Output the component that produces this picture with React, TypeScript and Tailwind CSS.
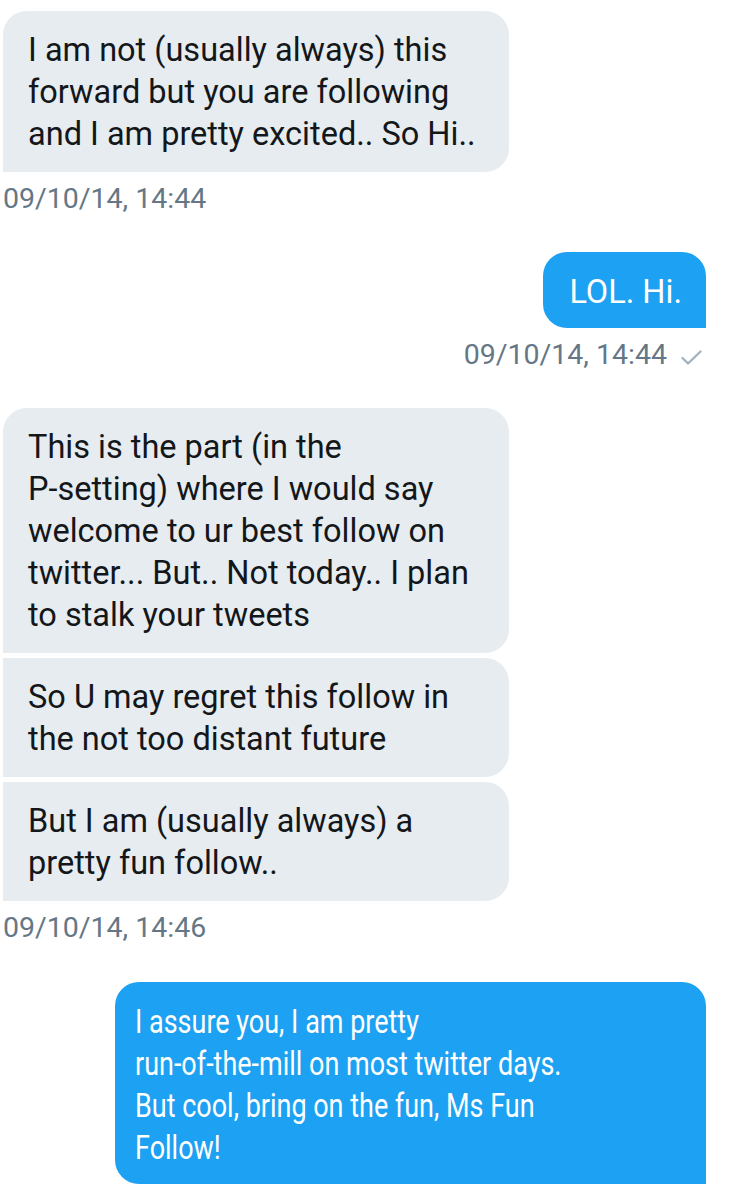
type Msg = { lines: string[] };

const Received = ({ lines, shape }: { lines: string[]; shape: string }) => (
  <div className={`w-[506px] bg-[#e6ecf0] text-[#14171a] px-[25px] pt-[18px] pb-[17px] whitespace-nowrap ${shape}`}>
    {lines.map((l, i) => (
      <div key={i}>{l}</div>
    ))}
  </div>
);

const Sent = ({ lines, width, squeeze }: { lines: string[]; width: string; squeeze?: boolean }) => (
  <div
    className={`bg-[#1da1f2] text-white pt-[19px] pb-[15px] rounded-[24px] rounded-br-none whitespace-nowrap ${
      squeeze ? "pl-[20px]" : "pl-[26px] pr-[24px]"
    } ${width}`}
  >
    {lines.map((l, i) => (
      <div key={i} className={squeeze ? "origin-left scale-x-[0.83]" : ""}>
        {l}
      </div>
    ))}
  </div>
);

const Stamp = ({ text, right, check }: { text: string; right?: boolean; check?: boolean }) => (
  <div
    className={`mt-[9px] h-[36px] leading-[36px] text-[28.5px] text-[#657786] flex items-center gap-[14px] ${
      right ? "justify-end pr-[4px]" : ""
    }`}
  >
    <span>{text}</span>
    {check && (
      <svg width="21" height="15" viewBox="0 0 21 15" fill="none" className="mt-[4px]">
        <path d="M1.5 8 L7 13.5 L19.5 1.5" stroke="#a4b3be" strokeWidth="2.4" strokeLinecap="round" strokeLinejoin="round" />
      </svg>
    )}
  </div>
);

const first: Msg = {
  lines: ["I am not (usually always) this", "forward but you are following", "and I am pretty excited.. So Hi.."],
};

export default function App() {
  return (
    <div
      className="w-[731px] h-[1200px] overflow-hidden bg-white pl-[3px] pr-[25px] pt-[11px] text-[32.5px] leading-[42px]"
      style={{ fontFamily: "Roboto, 'Noto Sans', sans-serif" }}
    >
      <Received lines={first.lines} shape="rounded-[24px] rounded-bl-none" />
      <Stamp text="09/10/14, 14:44" />

      <div className="mt-[35px] flex flex-col items-end">
        <Sent lines={["LOL. Hi."]} width="" />
      </div>
      <Stamp text="09/10/14, 14:44" right check />

      <div className="mt-[35px] flex flex-col gap-[5px]">
        <Received
          lines={[
            "This is the part (in the",
            "P-setting) where I would say",
            "welcome to ur best follow on",
            "twitter... But.. Not today.. I plan",
            "to stalk your tweets",
          ]}
          shape="rounded-[24px] rounded-bl-none"
        />
        <Received
          lines={["So U may regret this follow in", "the not too distant future"]}
          shape="rounded-r-[24px]"
        />
        <Received
          lines={["But I am (usually always) a", "pretty fun follow.."]}
          shape="rounded-r-[24px]"
        />
      </div>
      <Stamp text="09/10/14, 14:46" />

      <div className="mt-[36px] flex flex-col items-end">
        <Sent
          lines={[
            "I assure you, I am pretty",
            "run-of-the-mill on most twitter days.",
            "But cool, bring on the fun, Ms Fun",
            "Follow!",
          ]}
          width="w-[591px]"
          squeeze
        />
      </div>
      <Stamp text="09/10/14, 14:47" right check />
    </div>
  );
}
